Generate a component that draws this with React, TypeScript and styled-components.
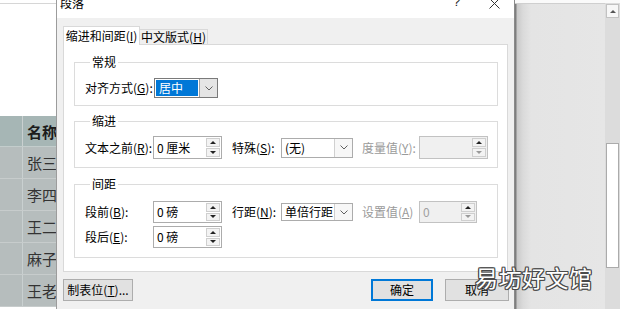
import React from 'react'
import styled, { createGlobalStyle } from 'styled-components'

const GlobalStyle = createGlobalStyle`
	html, body {
		margin: 0;
		padding: 0;
	}
	body {
		width: 620px;
		height: 309px;
		overflow: hidden;
		background: #fff;
		font-family: "Noto Sans CJK SC", "Noto Sans", sans-serif;
		font-size: 12px;
		color: #000;
	}
`

const Screen = styled.div`
	position: relative;
	display: flex;
	width: 620px;
	height: 309px;
	overflow: hidden;
`

/* ---------- spreadsheet behind the dialog ---------- */

const Sheet = styled.div`
	width: 56px;
	flex: none;
	display: flex;
	flex-direction: column;
	background: #fff;
`

const SheetTop = styled.div`
	height: 112px;
	margin-top: 3px;
	border-top: 1px solid #d6d6d6;
`

const SheetRow = styled.div<{ $head?: boolean; $h: number }>`
	display: flex;
	height: ${p => p.$h}px;
	flex: none;
	background: ${p => (p.$head ? '#a6b6b5' : '#b6bdbd')};
	border-bottom: 1px solid ${p => (p.$head ? '#c3cdcc' : '#c7cccc')};
	box-sizing: border-box;
`

const SheetCell = styled.div<{ $head?: boolean; $w?: number }>`
	width: ${p => (p.$w ? `${p.$w}px` : 'auto')};
	flex: ${p => (p.$w ? 'none' : '1')};
	display: flex;
	align-items: center;
	padding-left: ${p => (p.$w ? 0 : 4)}px;
	border-right: ${p => (p.$w ? '1px solid #c9d0d0' : 'none')};
	font-size: 15px;
	font-weight: ${p => (p.$head ? 700 : 400)};
	color: ${p => (p.$head ? '#1c1c1c' : '#333')};
	white-space: nowrap;
	overflow: hidden;
`

/* ---------- dialog ---------- */

const Dialog = styled.div`
	width: 459px;
	flex: none;
	box-sizing: border-box;
	display: flex;
	flex-direction: column;
	background: #f0f0f0;
	border-left: 1px solid #9c9c9c;
	border-right: 1px solid #8a8a8a;
`

const TitleBar = styled.div`
	height: 18px;
	flex: none;
	background: #fff;
	display: flex;
	align-items: flex-start;
	padding-left: 3px;
`

const Title = styled.div`
	margin-top: -4px;
	line-height: 14px;
	font-size: 12px;
	flex: 1;
`

const HelpMark = styled.div`
	margin-top: -5px;
	font-family: "Liberation Sans", sans-serif;
	font-size: 13px;
	line-height: 14px;
	color: #222;
	width: 36px;
`

const CloseIcon = styled.svg`
	margin-top: -2px;
	margin-right: 14px;
`

const Body = styled.div`
	flex: 1;
	padding: 8px 6px 0;
	display: flex;
	flex-direction: column;
`

const TabStrip = styled.div`
	display: flex;
	align-items: flex-end;
	height: 19px;
	position: relative;
	z-index: 1;
`

const Tab = styled.div<{ $active?: boolean; $w: number }>`
	width: ${p => p.$w}px;
	height: ${p => (p.$active ? 19 : 16)}px;
	box-sizing: border-box;
	display: flex;
	align-items: center;
	justify-content: center;
	background: ${p => (p.$active ? '#fff' : '#f0f0f0')};
	border: 1px solid #d9d9d9;
	border-bottom: ${p => (p.$active ? 'none' : '1px solid #d9d9d9')};
	border-left: ${p => (p.$active ? '1px solid #d9d9d9' : 'none')};
	line-height: 14px;
	padding-bottom: ${p => (p.$active ? 1 : 0)}px;
	white-space: nowrap;
`

const Panel = styled.div`
	height: 228px;
	box-sizing: border-box;
	margin-top: -1px;
	background: #fff;
	border: 1px solid #d9d9d9;
	padding: 10px 9px 0 10px;
	display: flex;
	flex-direction: column;
`

const Group = styled.fieldset<{ $pt: number; $pb: number; $mt?: number }>`
	margin: ${p => p.$mt ?? 0}px 0 0;
	padding: ${p => p.$pt}px 0 ${p => p.$pb}px 10px;
	border: 1px solid #dcdcdc;
	min-width: 0;
	display: flex;
	flex-direction: column;
	gap: 3px;
`

const Legend = styled.legend`
	margin-left: 5px;
	padding: 0 2px;
	line-height: 14px;
	font-size: 12px;
`

const Row = styled.div<{ $h: number }>`
	display: flex;
	align-items: center;
	height: ${p => p.$h}px;
`

const Label = styled.div<{ $w: number; $disabled?: boolean; $gap?: number }>`
	width: ${p => p.$w}px;
	margin-left: ${p => p.$gap ?? 0}px;
	flex: none;
	white-space: nowrap;
	line-height: 14px;
	color: ${p => (p.$disabled ? '#9a9a9a' : '#000')};
`

const U = styled.span`
	text-decoration: underline;
	text-underline-offset: 1px;
`

const Field = styled.div<{ $w: number; $h: number; $disabled?: boolean; $focus?: boolean }>`
	width: ${p => p.$w}px;
	height: ${p => p.$h}px;
	flex: none;
	box-sizing: border-box;
	display: flex;
	align-items: stretch;
	border: 1px solid ${p => (p.$disabled ? '#c2c2c2' : p.$focus ? '#7a7a7a' : '#acacac')};
	background: ${p => (p.$disabled ? '#f0f0f0' : '#fff')};
`

const FieldText = styled.div<{ $disabled?: boolean; $selected?: boolean }>`
	flex: 1;
	display: flex;
	align-items: center;
	padding-left: 3px;
	line-height: 14px;
	white-space: pre;
	overflow: hidden;
	color: ${p => (p.$selected ? '#fff' : p.$disabled ? '#a0a0a0' : '#000')};
	background: ${p => (p.$selected ? '#0078d7' : 'transparent')};
	margin: ${p => (p.$selected ? '1px' : '0')};
`

const Spinner = styled.div`
	width: 15px;
	flex: none;
	display: flex;
	flex-direction: column;
	gap: 1px;
	padding: 1px 1px 1px 0;
	box-sizing: border-box;
`

const SpinBtn = styled.div<{ $down?: boolean; $dim?: boolean }>`
	flex: 1;
	display: flex;
	align-items: center;
	justify-content: center;
	background: #f3f3f3;
	border: 1px solid #cfcfcf;
	&::after {
		content: '';
		width: 0;
		height: 0;
		border-left: 3px solid transparent;
		border-right: 3px solid transparent;
		${p =>
			p.$down
				? `border-top: 3px solid ${p.$dim ? '#9a9a9a' : '#222'};`
				: `border-bottom: 3px solid ${p.$dim ? '#555' : '#222'};`}
	}
`

const DropBtn = styled.div<{ $focus?: boolean }>`
	width: 17px;
	flex: none;
	display: flex;
	align-items: center;
	justify-content: center;
	background: ${p => (p.$focus ? '#e5e5e5' : '#f7f7f7')};
	border-left: 1px solid ${p => (p.$focus ? '#a0a0a0' : '#d0d0d0')};
`

const Footer = styled.div`
	display: flex;
	align-items: center;
	margin-top: 7px;
	height: 22px;
`

const Button = styled.div<{ $w: number; $primary?: boolean; $mr?: number }>`
	width: ${p => p.$w}px;
	height: 22px;
	box-sizing: border-box;
	margin-right: ${p => p.$mr ?? 0}px;
	display: flex;
	align-items: center;
	justify-content: center;
	background: #e1e1e1;
	border: ${p => (p.$primary ? '2px solid #0078d7' : '1px solid #adadad')};
	line-height: 14px;
	white-space: nowrap;
`

const Spacer = styled.div`
	flex: 1;
`

/* ---------- right side of the window ---------- */

const Backdrop = styled.div`
	flex: 1;
	display: flex;
	flex-direction: column;
	background: linear-gradient(to right, #7e7e7e 0, #7e7e7e 1px, #c9c9c9 2px, #dadada 8px, #e4e4e4 16px, #e6e6e6 100%);
	border-top: 3px solid #fafafa;
	box-shadow: inset 0 1px 0 #cfcfcf;
`

const ScrollBar = styled.div`
	width: 15px;
	flex: none;
	display: flex;
	flex-direction: column;
	align-items: stretch;
	background: #dcdcdc;
	border-top: 3px solid #fafafa;
	padding: 1px 1px 0 1px;
	box-sizing: border-box;
`

const ScrollArrow = styled.div`
	height: 14px;
	display: flex;
	align-items: center;
	justify-content: center;
	background: #f7f7f7;
	border: 1px solid #c2c2c2;
	box-sizing: border-box;
	&::after {
		content: '';
		width: 0;
		height: 0;
		border-left: 3px solid transparent;
		border-right: 3px solid transparent;
		border-bottom: 3px solid #555;
	}
`

const ScrollThumb = styled.div`
	margin-top: 125px;
	height: 125px;
	background: #fff;
	border: 1px solid #ababab;
	box-sizing: border-box;
`

const Watermark = styled.div`
	position: absolute;
	left: 475px;
	top: 262px;
	font-size: 23px;
	line-height: 30px;
	letter-spacing: 0.5px;
	color: #fff;
	text-shadow: 1px 0 0 #4a4a4a, -1px 0 0 #4a4a4a, 0 1px 0 #4a4a4a, 0 -1px 0 #4a4a4a, 1px 1px 0 #4a4a4a,
		-1px -1px 0 #4a4a4a, 1px -1px 0 #4a4a4a, -1px 1px 0 #4a4a4a;
	white-space: nowrap;
`

const Chevron = () => (
	<svg width="8" height="5" viewBox="0 0 8 5">
		<polyline points="0.5,0.5 4,4 7.5,0.5" fill="none" stroke="#606060" strokeWidth="1" />
	</svg>
)

const SpinInput = ({ w, h, text, disabled }: { w: number; h: number; text: string; disabled?: boolean }) => (
	<Field $w={w} $h={h} $disabled={disabled}>
		<FieldText $disabled={disabled}>{text}</FieldText>
		<Spinner>
			<SpinBtn />
			<SpinBtn $down $dim={disabled} />
		</Spinner>
	</Field>
)

const Select = ({ w, h, text, focus }: { w: number; h: number; text: string; focus?: boolean }) => (
	<Field $w={w} $h={h} $focus={focus}>
		<FieldText $selected={focus}>{text}</FieldText>
		<DropBtn $focus={focus}>
			<Chevron />
		</DropBtn>
	</Field>
)

const sheetRows = ['张三', '李四', '王二', '麻子', '王老']

export default function App() {
	return (
		<Screen>
			<GlobalStyle />
			<Sheet>
				<SheetTop />
				<SheetRow $head $h={31}>
					<SheetCell $head $w={22} />
					<SheetCell $head>名称</SheetCell>
				</SheetRow>
				{sheetRows.map(name => (
					<SheetRow key={name} $h={32}>
						<SheetCell $w={22} />
						<SheetCell>{name}</SheetCell>
					</SheetRow>
				))}
			</Sheet>

			<Dialog>
				<TitleBar>
					<Title>段落</Title>
					<HelpMark>?</HelpMark>
					<CloseIcon width="11" height="11" viewBox="0 0 11 11">
						<path d="M0.5 0.5 L10.5 10.5 M10.5 0.5 L0.5 10.5" stroke="#333" strokeWidth="1" />
					</CloseIcon>
				</TitleBar>
				<Body>
					<TabStrip>
						<Tab $active $w={77}>
							缩进和间距(<U>I</U>)
						</Tab>
						<Tab $w={68}>
							中文版式(<U>H</U>)
						</Tab>
					</TabStrip>
					<Panel>
						<Group $pt={9} $pb={7}>
							<Legend>常规</Legend>
							<Row $h={20}>
								<Label $w={69}>
									对齐方式(<U>G</U>):
								</Label>
								<Select w={64} h={20} text="居中" focus />
							</Row>
						</Group>

						<Group $pt={8} $pb={8} $mt={8}>
							<Legend>缩进</Legend>
							<Row $h={23}>
								<Label $w={68}>
									文本之前(<U>R</U>):
								</Label>
								<SpinInput w={69} h={23} text="0 厘米" />
								<Label $w={49} $gap={10}>
									特殊(<U>S</U>):
								</Label>
								<Select w={72} h={20} text="(无)" />
								<Label $w={57} $gap={9} $disabled>
									度量值(<U>Y</U>):
								</Label>
								<SpinInput w={69} h={23} text="" disabled />
							</Row>
						</Group>

						<Group $pt={10} $pb={9} $mt={9}>
							<Legend>间距</Legend>
							<Row $h={22}>
								<Label $w={68}>
									段前(<U>B</U>):
								</Label>
								<SpinInput w={69} h={22} text="0 磅" />
								<Label $w={49} $gap={10}>
									行距(<U>N</U>):
								</Label>
								<Select w={72} h={18} text="单倍行距" />
								<Label $w={57} $gap={9} $disabled>
									设置值(<U>A</U>)
								</Label>
								<SpinInput w={58} h={22} text="0" disabled />
							</Row>
							<Row $h={22}>
								<Label $w={68}>
									段后(<U>E</U>):
								</Label>
								<SpinInput w={69} h={22} text="0 磅" />
							</Row>
						</Group>
					</Panel>
					<Footer>
						<Button $w={70}>
							制表位(<U>T</U>)...
						</Button>
						<Spacer />
						<Button $w={62} $primary $mr={12}>
							确定
						</Button>
						<Button $w={64} $mr={-1}>
							取消
						</Button>
					</Footer>
				</Body>
			</Dialog>

			<Backdrop />
			<ScrollBar>
				<ScrollArrow />
				<ScrollThumb />
			</ScrollBar>

			<Watermark>易坊好文馆</Watermark>
		</Screen>
	)
}
